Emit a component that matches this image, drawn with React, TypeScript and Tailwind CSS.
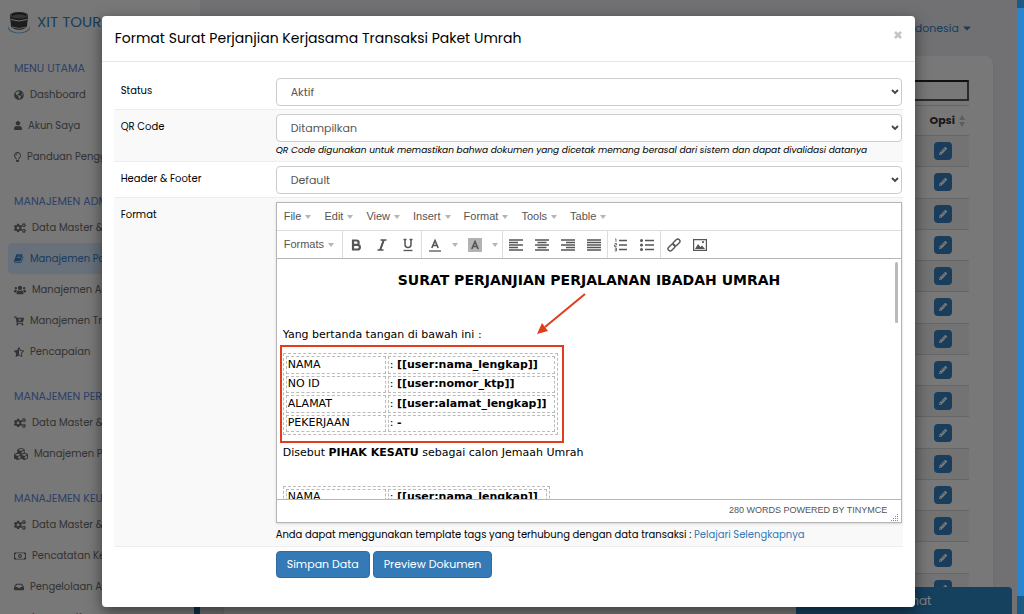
import { useState } from 'react';
import type { ReactNode } from 'react';
import {
  FaCaretDown,
  FaCartPlus,
  FaCogs,
  FaCubes,
  FaGlobeAmericas,
  FaInbox,
  FaPencilAlt,
  FaRegLightbulb,
  FaRegMoneyBillAlt,
  FaStarHalfAlt,
  FaUser,
  FaUsers,
} from 'react-icons/fa';

type MenuItem = { label: string; icon: ReactNode; active?: boolean };
type MenuSection = { title: string; items: MenuItem[] };

const BookIcon = () => (
  <svg viewBox="0 0 1792 1792" className="h-[11px] w-2.5" fill="currentColor">
    <path d="M1639 478q40 57 18 129l-275 906q-19 64-76.500 107.500t-122.500 43.500h-923q-77 0-148.500-53.500t-99.500-131.500q-24-67-2-127 0-4 3-27t4-37q1-8-3-21.500t-3-19.500q2-11 8-21t16.500-23.500 16.500-23.500q23-38 45-91.500t30-91.500q3-10 .5-30t-.5-28q3-11 17-28t17-23q21-36 42-92t25-90q1-9-2.500-32t.5-28q4-13 22-30.500t22-22.500q19-26 42.500-84.500t27.500-96.500q1-8-3-25.500t-2-26.500q2-8 9-18t18-23 17-21q8-12 16.500-30.500t15-35 16-36 19.500-32 26.500-23.500 36-11.500 47.500 5.500l-1 3q38-9 51-9h761q74 0 114 56t18 130l-274 906q-36 119-71.500 153.500t-128.500 34.500h-869q-27 0-38 15-11 16-1 43 24 70 144 70h923q29 0 56-15.500t35-41.500l300-987q7-22 5-57 38 15 59 43zm-1064 2q-4 13 2 22.500t20 9.500h608q13 0 25.500-9.500t16.500-22.500l21-64q4-13-2-22.500t-20-9.500h-608q-13 0-25.500 9.500t-16.500 22.500zm-83 256q-4 13 2 22.500t20 9.500h608q13 0 25.500-9.500t16.500-22.500l21-64q4-13-2-22.500t-20-9.500h-608q-13 0-25.500 9.500t-16.500 22.500z" />
  </svg>
);

const sections: MenuSection[] = [
  {
    title: 'MENU UTAMA',
    items: [
      { label: 'Dashboard', icon: <FaGlobeAmericas className="h-2.5 w-2.5" /> },
      { label: 'Akun Saya', icon: <FaUser className="h-[9px] w-2" /> },
      { label: 'Panduan Pengguna', icon: <FaRegLightbulb className="h-2.5 w-[7px]" /> },
    ],
  },
  {
    title: 'MANAJEMEN ADMIN',
    items: [
      { label: 'Data Master & Setting', icon: <FaCogs className="h-3 w-3" /> },
      { label: 'Manajemen Paket', icon: <BookIcon />, active: true },
      { label: 'Manajemen Agen', icon: <FaUsers className="h-3 w-3" /> },
      { label: 'Manajemen Transaksi', icon: <FaCartPlus className="h-2.5 w-2.5" /> },
      { label: 'Pencapaian', icon: <FaStarHalfAlt className="h-2.5 w-2.5" /> },
    ],
  },
  {
    title: 'MANAJEMEN PERLENGKAPAN',
    items: [
      { label: 'Data Master & Setting', icon: <FaCogs className="h-3 w-3" /> },
      { label: 'Manajemen Perlengkapan', icon: <FaCubes className="h-3.5 w-3.5" /> },
    ],
  },
  {
    title: 'MANAJEMEN KEUANGAN',
    items: [
      { label: 'Data Master & Setting', icon: <FaCogs className="h-3 w-3" /> },
      { label: 'Pencatatan Keuangan', icon: <FaRegMoneyBillAlt className="h-3 w-3" /> },
      { label: 'Pengelolaan Aset', icon: <FaInbox className="h-2.5 w-2.5" /> },
      { label: 'Laporan Keuangan', icon: <FaRegMoneyBillAlt className="h-3 w-3" /> },
    ],
  },
];

const Logo = () => (
  <svg viewBox="0 0 24 24" className="h-6 w-6 shrink-0">
    <path d="M1 15c0 10 22 10 22 0v3c-1 7-21 7-22 0z" fill="#5aa9dd" />
    <path d="M3 6c0-3 4-4 9-4s9 1 9 4l-1 10c-2 5-14 5-16 0z" fill="#3a3a3a" />
    <path d="M3 6c0-5 18-5 18 0-2 3-16 3-18 0z" fill="#6a6a6a" />
    <path d="M5 5q7-3 14 0" stroke="#222" strokeWidth="1.500" fill="none" />
    <path d="M4 9.500q8 3 16 0" stroke="#ddd" strokeWidth="1" fill="none" />
    <path d="M5 17q7 3 14 0" stroke="#bbb" strokeWidth="1" fill="none" />
  </svg>
);

const Sidebar = () => (
  <aside className="relative h-full w-[200px] shrink-0 overflow-hidden bg-[#f0f0f0]">
    <div className="flex h-[57px] items-start gap-1 pt-[10px] pl-[7px]">
      <Logo />
      <span className="pl-0.5 text-[15px] leading-6 whitespace-nowrap text-[#337ab7]">XIT TOUR &amp; TRAVEL</span>
    </div>
    <nav>
      {sections.map((section) => (
        <div key={section.title} className="mb-[18px] px-2">
          <h3 className="pl-1.5 text-[11px] leading-[22px] whitespace-nowrap text-[#5a82d2]">{section.title}</h3>
          {section.items.map((item) => (
            <a
              key={item.label}
              href="#"
              className={`flex h-[31px] items-center gap-1.5 rounded pl-1.5 text-[10px] whitespace-nowrap ${
                item.active ? 'bg-[#cfe0f7] text-[#337ab7]' : 'text-[#666]'
              }`}
            >
              {item.icon}
              {item.label}
            </a>
          ))}
        </div>
      ))}
    </nav>
    <div className="absolute top-4 right-0 bottom-0 w-1.5 bg-[#23618c]" />
  </aside>
);

const rows = Array.from({ length: 15 }, (_, i) => i);

const Content = () => (
  <main className="flex min-w-0 flex-1 flex-col bg-[#e2e3e7]">
    <div className="flex h-14 shrink-0 items-center justify-end pr-11">
      <button type="button" className="flex items-center gap-0.5 text-[11px] text-[#337ab7]">
        Bahasa Indonesia <FaCaretDown className="h-3 w-3" />
      </button>
    </div>
    <div className="mr-6 ml-6 flex-1 rounded-t-lg bg-[#f0f0f0] px-6 pt-6 shadow">
      <div className="flex justify-end">
        <input aria-label="Cari" className="h-[21px] w-40 border-2 border-[#555] border-t-[#222] bg-transparent" />
      </div>
      <table className="mt-1 h-[500px] w-full text-[11px] text-[#333]">
        <thead>
          <tr className="h-[30px] border-y border-[#ccc]">
            <th className="text-left">Nama Dokumen</th>
            <th className="w-[54px] text-right">
              <span className="inline-flex items-center gap-1 pr-1">
                Opsi
                <svg viewBox="0 0 6 12" className="h-3 w-1.5" fill="#bbb">
                  <path d="M3 0l3 5H0zM3 12l3-5H0z" />
                </svg>
              </span>
            </th>
          </tr>
        </thead>
        <tbody>
          {rows.map((row) => (
            <tr key={row} className="border-b border-[#ccc] odd:bg-[#e7e7e7]">
              <td />
              <td>
                <button
                  type="button"
                  aria-label="Ubah"
                  className="ml-[19px] flex h-[18px] w-[18px] items-center justify-center rounded-sm bg-[#337ab7] text-[8px] text-white"
                >
                  <FaPencilAlt />
                </button>
              </td>
            </tr>
          ))}
        </tbody>
      </table>
    </div>
  </main>
);

type FormRowProps = { label?: string; htmlFor?: string; striped?: boolean; children: ReactNode };

const FormRow = ({ label, htmlFor, striped, children }: FormRowProps) => (
  <div
    className={`flex pt-1 pr-px pb-[3px] pl-[7px] text-[10px] text-black ${
      striped ? 'border-y border-[#eee] bg-[#f9f9f9]' : ''
    }`}
  >
    <label htmlFor={htmlFor} className="w-[155px] shrink-0 pt-[5px] leading-4">
      {label}
    </label>
    <div className="min-w-0 flex-1">{children}</div>
  </div>
);

type SelectFieldProps = { id: string; options: string[] };

const SelectField = ({ id, options }: SelectFieldProps) => {
  const [value, setValue] = useState(options[0]);

  return (
    <div className="relative">
      <select
        id={id}
        value={value}
        onChange={(e) => setValue(e.target.value)}
        className="h-7 w-full appearance-none rounded border border-[#ccc] bg-white pl-3.5 text-[11px] text-[#555]"
      >
        {options.map((option) => (
          <option key={option}>{option}</option>
        ))}
      </select>
      <svg viewBox="0 0 8 6" className="pointer-events-none absolute top-[11px] right-[3px] h-1.5 w-2">
        <path d="M1 1l3 3 3-3" fill="none" stroke="#444" strokeWidth="1.8" />
      </svg>
    </div>
  );
};

const Caret = () => (
  <svg viewBox="0 0 6 4" className="h-[4px] w-[6px]" fill="#b5b5b5">
    <path d="M0 0h6L3 4z" />
  </svg>
);

type ToolProps = { label: string; children: ReactNode };

const Tool = ({ label, children }: ToolProps) => (
  <button type="button" aria-label={label} className="flex h-full w-[26px] items-center justify-center">
    <svg viewBox="0 0 14 14" className="h-3.5 w-3.5" fill="none" stroke="#555">
      {children}
    </svg>
  </button>
);

const menus = ['File', 'Edit', 'View', 'Insert', 'Format', 'Tools', 'Table'];

const Toolbar = () => (
  <div className="flex h-7 items-center border-b border-[#b5b5b5] text-[11px] text-[#555]">
    <button type="button" className="flex h-full w-[66px] items-center gap-1 border-r border-[#ddd] pl-[7px]">
      Formats <Caret />
    </button>
    <div className="flex h-full border-r border-[#ddd]">
      <Tool label="Bold">
        <path d="M4 2.500h3.500a2 2 0 010 4.300H4zM4 6.800h4.500a2.300 2.300 0 010 4.700H4z" strokeWidth="2.200" />
      </Tool>
      <Tool label="Italic">
        <path d="M5.500 2h6M2.500 12h6M9 2L5 12" strokeWidth="1.300" />
        <path d="M8.700 2L5.200 12" strokeWidth="2" />
      </Tool>
      <Tool label="Underline">
        <path d="M4 1.500v5a3 3 0 006 0v-5M2.500 1.500h3M8.500 1.500h3" strokeWidth="1.500" />
        <path d="M2.500 12.500h9" strokeWidth="1.300" />
      </Tool>
    </div>
    <div className="flex h-full border-r border-[#ddd]">
      <Tool label="Text color">
        <path d="M3.800 10L7 2.500l3.200 7.500M5 7.500h4" strokeWidth="1.600" />
        <path d="M1 13h12" strokeWidth="1.300" />
      </Tool>
      <button type="button" aria-label="Text color options" className="px-1">
        <Caret />
      </button>
      <Tool label="Background color">
        <path d="M0 0h14v14H0z" fill="#b3b3b3" stroke="none" />
        <path d="M3.800 11L7 3.500l3.200 7.500M5 8.500h4" strokeWidth="1.600" />
      </Tool>
      <button type="button" aria-label="Background color options" className="px-1">
        <Caret />
      </button>
    </div>
    <div className="flex h-full border-r border-[#ddd]">
      <Tool label="Align left">
        <path d="M0 2h14M0 4.500h9M0 7h14M0 9.500h9M0 12h14" strokeWidth="1.500" />
      </Tool>
      <Tool label="Align center">
        <path d="M0 2h14M2.500 4.500h9M0 7h14M2.500 9.500h9M0 12h14" strokeWidth="1.500" />
      </Tool>
      <Tool label="Align right">
        <path d="M0 2h14M5 4.500h9M0 7h14M5 9.500h9M0 12h14" strokeWidth="1.500" />
      </Tool>
      <Tool label="Justify">
        <path d="M0 2h14M0 4.500h14M0 7h14M0 9.500h14M0 12h14" strokeWidth="1.500" />
      </Tool>
    </div>
    <div className="flex h-full border-r border-[#ddd]">
      <Tool label="Numbered list">
        <path d="M5 2.500h8M5 7h8M5 11.500h8" strokeWidth="1.500" />
        <path d="M1 1h1v3M.5 5.500h2v1.500h-2v1.500h2M.5 10h2v3h-2M1 11.500h1" strokeWidth=".8" />
      </Tool>
      <Tool label="Bullet list">
        <path d="M5 2.500h9M5 7h9M5 11.500h9" strokeWidth="1.500" />
        <path d="M1.500 1a1.500 1.500 0 100 3 1.500 1.500 0 000-3zM1.500 5.500a1.500 1.500 0 100 3 1.500 1.500 0 000-3zM1.500 10a1.500 1.500 0 100 3 1.500 1.500 0 000-3z" fill="#555" stroke="none" />
      </Tool>
    </div>
    <Tool label="Link">
      <g strokeWidth="1.400" transform="rotate(-45 7 7)">
        <rect x="-.5" y="4.800" width="8" height="4.400" rx="2.200" />
        <rect x="6.500" y="4.800" width="8" height="4.400" rx="2.200" />
      </g>
    </Tool>
    <Tool label="Image">
      <path d="M.6 1.600h12.800v10.800H.6z" strokeWidth="1.200" />
      <path d="M2 11l3-5 2.500 3L9 7.500l3 3.500z" fill="#555" stroke="none" />
      <path d="M10 3a1 1 0 100 2.200A1 1 0 0010 3z" fill="#555" stroke="none" />
    </Tool>
  </div>
);

type PersonTableProps = { data: string[][]; className: string };

const PersonTable = ({ data, className }: PersonTableProps) => (
  <table className={`border-separate border-spacing-[2px] border border-dashed border-[#bbb] leading-[14px] ${className}`}>
    <tbody>
      {data.map(([name, value]) => (
        <tr key={name}>
          <td className="w-[100px] border border-dashed border-[#bbb] px-px">{name}</td>
          <td className="border border-dashed border-[#bbb] px-px whitespace-nowrap">
            : <strong>{value}</strong>
          </td>
        </tr>
      ))}
    </tbody>
  </table>
);

const firstParty = [
  ['NAMA', '[[user:nama_lengkap]]'],
  ['NO ID', '[[user:nomor_ktp]]'],
  ['ALAMAT', '[[user:alamat_lengkap]]'],
  ['PEKERJAAN', '-'],
];

const secondParty = [['NAMA', '[[user:nama_lengkap]]']];

const Editor = () => (
  <div className="border border-[#b5b5b5] bg-white font-['Liberation_Sans',Arial,sans-serif] shadow-sm">
    <div className="flex h-7 items-center gap-[13px] border-b border-[#ddd] pl-[7px] text-[11px] text-[#555]">
      {menus.map((menu) => (
        <button key={menu} type="button" className="flex items-center gap-1">
          {menu} <Caret />
        </button>
      ))}
    </div>
    <Toolbar />
    <div className="relative h-[240px] overflow-hidden px-1.5 pt-3 font-['DejaVu_Sans',Verdana,sans-serif] text-[11px] leading-[18px] text-black">
      <h2 className="text-center text-[14px] leading-[18px] font-bold">SURAT PERJANJIAN PERJALANAN IBADAH UMRAH</h2>
      <p className="mt-[37px]">Yang bertanda tangan di bawah ini :</p>
      <div className="relative mt-[9px] w-fit">
        <PersonTable data={firstParty} className="h-[82px] w-[275px]" />
        <div className="absolute -top-2 -right-1.5 -bottom-2 -left-[3px] border-2 border-[#e23c1c]" />
      </div>
      <p className="mt-[9px]">
        Disebut <strong>PIHAK KESATU</strong> sebagai calon Jemaah Umrah
      </p>
      <PersonTable data={secondParty} className="mt-6 w-[267px]" />
      <div className="absolute top-[3px] right-[3px] h-[61px] w-[3px] rounded-full bg-[#b9b9b9]" />
      <svg viewBox="0 0 50 42" className="absolute top-[34px] left-[260px] h-[42px] w-[50px]">
        <path d="M48 1L8 34" stroke="#e23c1c" strokeWidth="2" />
        <path d="M0 41l5-11 6 8z" fill="#e23c1c" />
      </svg>
    </div>
    <div className="flex h-[23px] items-center justify-end gap-1 border-t border-[#b5b5b5] pr-0.5 text-[9px] text-[#555]">
      280 WORDS POWERED BY TINYMCE
      <svg viewBox="0 0 8 8" className="h-2 w-2 self-end" fill="#888">
        <path d="M6 0h1v1H6zM4 2h1v1H4zM6 2h1v1H6zM2 4h1v1H2zM4 4h1v1H4zM6 4h1v1H6zM0 6h1v1H0zM2 6h1v1H2zM4 6h1v1H4zM6 6h1v1H6z" />
      </svg>
    </div>
  </div>
);

const primaryButton = 'h-[27px] rounded border border-[#2e6da4] bg-[#337ab7] px-2.5 text-[11px] text-white';

const FormatModal = () => (
  <div
    role="dialog"
    aria-labelledby="modal-title"
    className="mx-auto mt-4 w-4/5 rounded bg-white pb-[26px] shadow-[0_5px_15px_rgba(0,0,0,0.5)]"
  >
    <div className="flex h-[46px] items-center justify-between border-b border-[#e5e5e5] pr-[13px] pl-[13px]">
      <h1 id="modal-title" className="text-[14px] text-black">
        Format Surat Perjanjian Kerjasama Transaksi Paket Umrah
      </h1>
      <button type="button" aria-label="Tutup" className="-mt-2">
        <svg viewBox="0 0 8 8" className="h-2 w-2" stroke="#c4c4c4" strokeWidth="2.600">
          <path d="M1 1l6 6M7 1L1 7" />
        </svg>
      </button>
    </div>
    <form className="px-3 pt-3" onSubmit={(e) => e.preventDefault()}>
      <FormRow label="Status" htmlFor="status">
        <SelectField id="status" options={['Aktif', 'Tidak Aktif']} />
      </FormRow>
      <FormRow label="QR Code" htmlFor="qrcode" striped>
        <SelectField id="qrcode" options={['Ditampilkan', 'Disembunyikan']} />
        <p className="text-[9px] leading-4 italic">
          QR Code digunakan untuk memastikan bahwa dokumen yang dicetak memang berasal dari sistem dan dapat divalidasi datanya
        </p>
      </FormRow>
      <FormRow label="Header & Footer" htmlFor="header">
        <SelectField id="header" options={['Default', 'Custom']} />
      </FormRow>
      <FormRow label="Format" striped>
        <Editor />
        <p className="pt-1 leading-4">
          Anda dapat menggunakan template tags yang terhubung dengan data transaksi :{' '}
          <a href="#" className="text-[#337ab7]">
            Pelajari Selengkapnya
          </a>
        </p>
      </FormRow>
      <FormRow>
        <div className="flex gap-[3px]">
          <button type="submit" className={primaryButton}>
            Simpan Data
          </button>
          <button type="button" className={primaryButton}>
            Preview Dokumen
          </button>
        </div>
      </FormRow>
    </form>
  </div>
);

const App = () => {
  return (
    <div className="flex h-screen overflow-hidden bg-[#2a85d0] font-[Poppins,Inter,sans-serif]">
      <div className="relative flex min-w-0 flex-1 overflow-hidden">
        <Sidebar />
        <Content />
        <button
          type="button"
          className="absolute right-[5px] bottom-0 h-[27px] w-[216px] rounded-t bg-[#2a80bd] text-[12px] text-white"
        >
          Live Chat
        </button>
        {/* Modal */}
        <div className="absolute inset-0 overflow-hidden bg-black/50">
          <FormatModal />
        </div>
      </div>
      <div className="flex w-[7px] shrink-0 flex-col justify-between">
        <div className="h-2 bg-[#1b5a85]" />
        <div className="h-[18px] bg-[#1b5a85]" />
      </div>
    </div>
  );
};

export default App;
